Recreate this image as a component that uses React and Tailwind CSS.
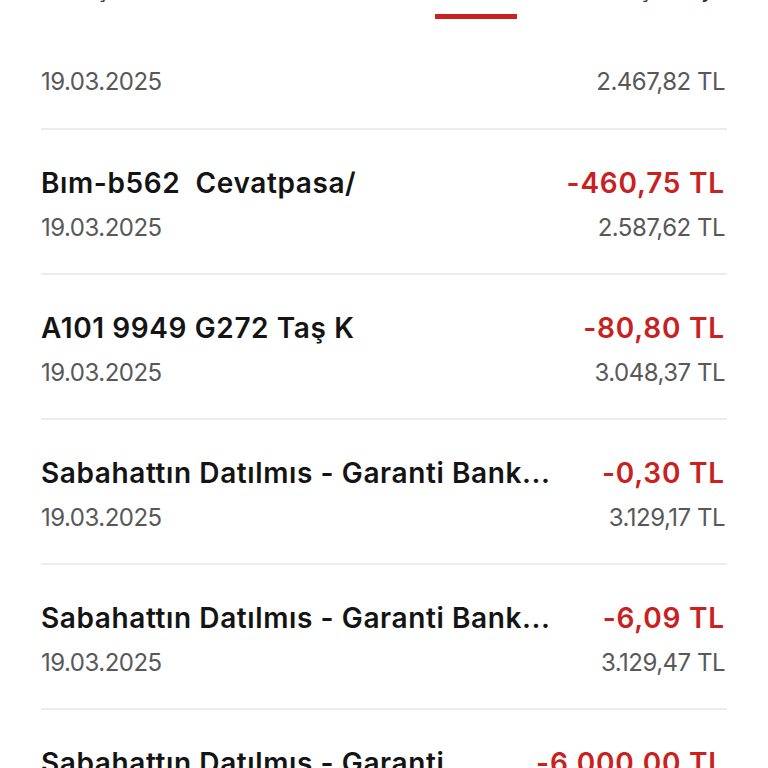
const tabs = ['Son İşlemler', 'Gelen', 'Giden', 'Geçen Ay'];

const rows = [
  { title: 'Bım-b562  Cevatpasa/', amount: '-460,75 TL', balance: '2.587,62 TL', date: '19.03.2025' },
  { title: 'A101 9949 G272 Taş K', amount: '-80,80 TL', balance: '3.048,37 TL', date: '19.03.2025' },
  { title: 'Sabahattın Datılmıs - Garanti Bank...', amount: '-0,30 TL', balance: '3.129,17 TL', date: '19.03.2025' },
  { title: 'Sabahattın Datılmıs - Garanti Bank...', amount: '-6,09 TL', balance: '3.129,47 TL', date: '19.03.2025' },
  { title: 'Sabahattın Datılmıs - Garanti', amount: '-6.000,00 TL', balance: '3.135,56 TL', date: '19.03.2025' },
];

function Row({ row }) {
  return (
    <div className="border-t-2 border-[#ececec] pt-[35px] pb-[30px]">
      <div className="flex justify-between items-center h-[36px]">
        <span className="whitespace-pre text-[28px] font-semibold text-[#141414] tracking-[0.6px]">{row.title}</span>
        <span className="whitespace-nowrap text-[28px] font-semibold text-[#c8211e] tracking-[0.8px] pr-[2px]">{row.amount}</span>
      </div>
      <div className="flex justify-between items-center h-[30px] mt-[12px] text-[24px] text-[#58585a] tracking-[-0.5px]">
        <span>{row.date}</span>
        <span className="pr-[2px]">{row.balance}</span>
      </div>
    </div>
  );
}

export default function App() {
  return (
    <div className="h-[768px] overflow-hidden bg-white font-['Inter',sans-serif]">
      {/* tab header, mostly scrolled away */}
      <div className="h-[67px] px-[16px] flex flex-col">
        <div className="grid grid-cols-4 -mt-[26px]">
          {tabs.map((t, i) => (
            <div key={t} className="flex flex-col items-center">
              <span className="text-[24px] leading-[30px] text-[#333] whitespace-nowrap">{t}</span>
              <div className={`mt-[10px] h-[5px] w-[82px] ${i === 2 ? 'bg-[#c8211e]' : 'bg-transparent'}`} />
            </div>
          ))}
        </div>
      </div>

      <div className="px-[41px]">
        {/* previous row, only its date line still visible */}
        <div className="flex justify-between items-center h-[30px] text-[24px] text-[#58585a] tracking-[-0.5px]">
          <span>19.03.2025</span>
          <span className="pr-[2px]">2.467,82 TL</span>
        </div>
        <div className="h-[31px]" />
        {rows.map((r, i) => (
          <Row key={i} row={r} />
        ))}
      </div>
    </div>
  );
}
